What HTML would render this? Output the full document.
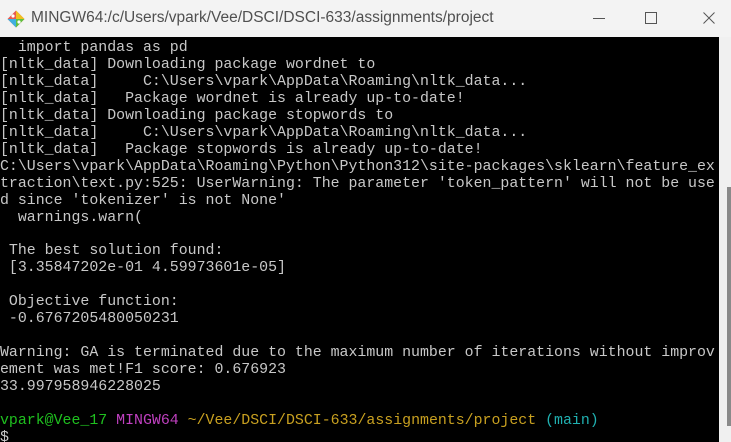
<!DOCTYPE html>
<html><head><meta charset="utf-8"><style>
body{margin:0;width:731px;height:442px;overflow:hidden;background:#000;position:relative;font-family:"Liberation Sans",sans-serif}
#tb{position:absolute;left:0;top:0;width:731px;height:37px;background:#f3f3f3}
#title{position:absolute;left:31px;top:9px;font-size:15.5px;color:#505050;white-space:nowrap}
#term{position:absolute;left:0;top:37px;width:719px;height:405px;background:#000;overflow:hidden;padding-top:3px;box-sizing:border-box}
pre{margin:0;font-family:"Liberation Mono",monospace;font-size:14.9px;line-height:16.95px;color:#c8c8c8;white-space:pre}
#sb{position:absolute;left:719px;top:37px;width:12px;height:405px;background:#f0f0f0}
#th{position:absolute;left:8px;top:150px;width:4px;height:239px;background:#8a8a8a}
.g{color:#1fc01f}.m{color:#c040c0}.y{color:#c8a020}.c{color:#20b0b0}
</style></head><body>
<div id="tb">
<svg style="position:absolute;left:6px;top:9px" width="20" height="20" viewBox="0 0 20 20">
<rect x="4" y="4" width="12" height="12" transform="rotate(45 10 10)" fill="#e85a4f"/>
<polygon points="10,1.5 18.5,10 10,10" fill="#f0c020"/>
<polygon points="1.5,10 10,10 10,18.5" fill="#40b0e0"/>
<polygon points="10,10 18.5,10 10,18.5" fill="#60c040"/>
<circle cx="7" cy="7" r="1.6" fill="#fff"/><circle cx="13" cy="13" r="1.6" fill="#fff"/>
</svg>
<div id="title">MINGW64:/c/Users/vpark/Vee/DSCI/DSCI-633/assignments/project</div>
<div style="position:absolute;left:593px;top:18px;width:12px;height:1px;background:#555"></div>
<div style="position:absolute;left:645px;top:12px;width:10px;height:10px;border:1px solid #555"></div>
<svg style="position:absolute;left:703px;top:12px" width="12" height="12"><path d="M0.5 0.5L11.5 11.5M11.5 0.5L0.5 11.5" stroke="#555" stroke-width="1"/></svg>
</div>
<div id="term"><pre>  import pandas as pd
[nltk_data] Downloading package wordnet to
[nltk_data]     C:\Users\vpark\AppData\Roaming\nltk_data...
[nltk_data]   Package wordnet is already up-to-date!
[nltk_data] Downloading package stopwords to
[nltk_data]     C:\Users\vpark\AppData\Roaming\nltk_data...
[nltk_data]   Package stopwords is already up-to-date!
C:\Users\vpark\AppData\Roaming\Python\Python312\site-packages\sklearn\feature_ex
traction\text.py:525: UserWarning: The parameter 'token_pattern' will not be use
d since 'tokenizer' is not None'
  warnings.warn(

 The best solution found:
 [3.35847202e-01 4.59973601e-05]

 Objective function:
 -0.6767205480050231

Warning: GA is terminated due to the maximum number of iterations without improv
ement was met!F1 score: 0.676923
33.997958946228025

<span class="g">vpark@Vee_17</span> <span class="m">MINGW64</span> <span class="y">~/Vee/DSCI/DSCI-633/assignments/project</span> <span class="c">(main)</span>
$ </pre></div>
<div id="sb"><div id="th"></div></div>
</body></html>
